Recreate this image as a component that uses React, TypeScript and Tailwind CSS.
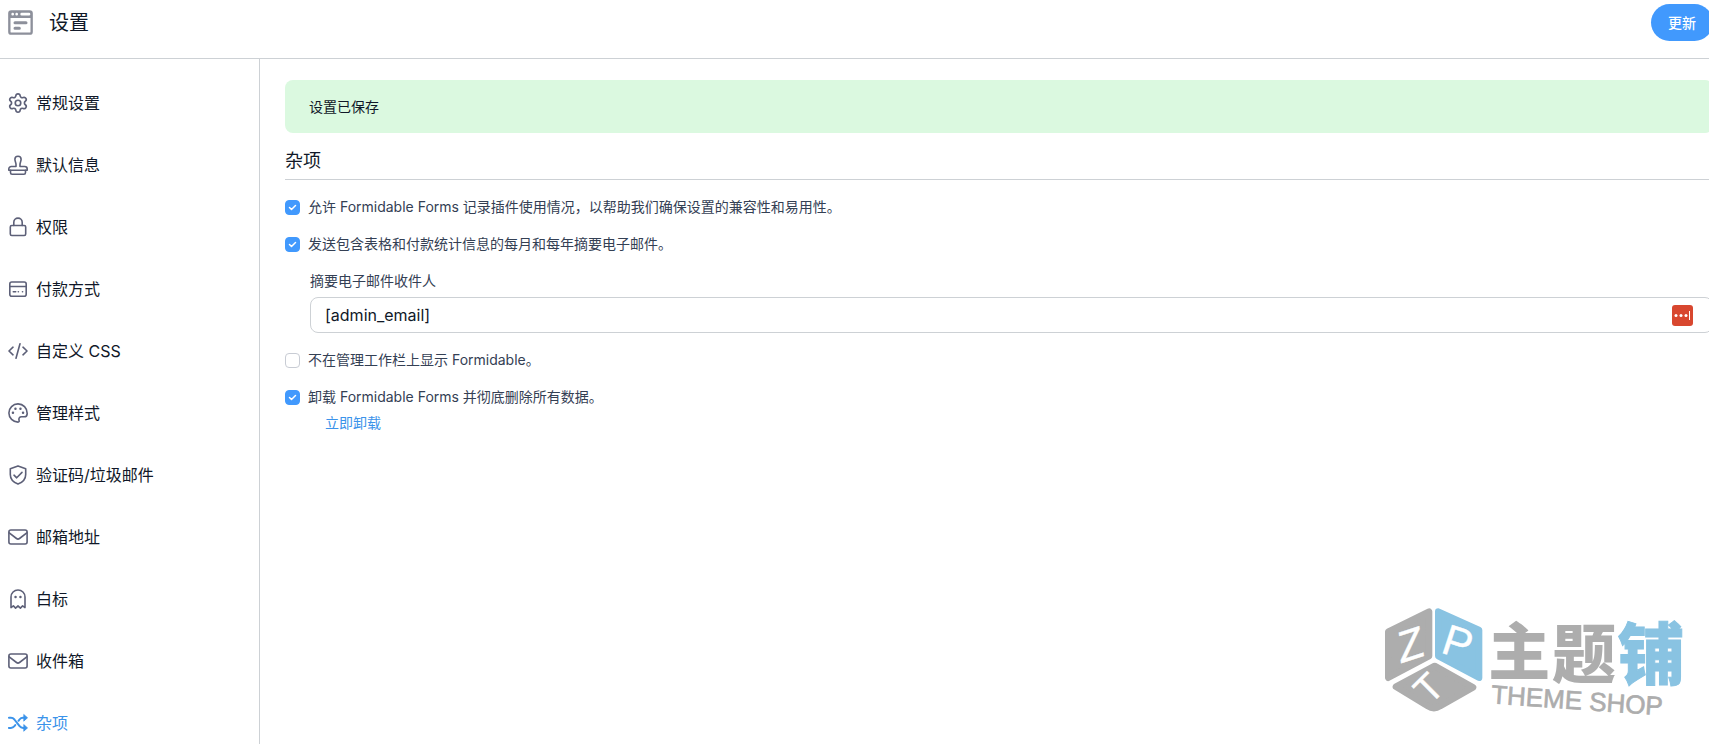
import React from "react";
import { Settings } from "lucide-react";

type IconName =
  | "gear"
  | "stamp"
  | "lock"
  | "card"
  | "code"
  | "palette"
  | "shield"
  | "mail"
  | "ghost"
  | "shuffle";

const iconShapes: Record<IconName, React.ReactNode> = {
  gear: <Settings x={-1} y={-1} width={22} height={22} strokeWidth={1.8} />,
  stamp: (
    <>
      <path d="M8 11.500V9.300C8 7.500 6.900 6.300 6.900 4.300a3.100 3.100 0 0 1 6.200 0c0 2-1.100 3.200-1.100 5v2.200h4.700A2.500 2.500 0 0 1 19.200 14v1.200H.8V14a2.500 2.500 0 0 1 2.500-2.500z" />
      <path d="M2.500 15.300v2.200c0 1 .6 1.700 1.600 1.700h11.800c1 0 1.600-.7 1.600-1.700v-2.200" />
    </>
  ),
  lock: (
    <>
      <rect x="2.300" y="8.500" width="15.400" height="10" rx="1.500" />
      <path d="M5.800 8.500V5.300a4.200 4.200 0 0 1 8.400 0v3.200" />
    </>
  ),
  card: (
    <>
      <rect x="1.800" y="3" width="16.400" height="14.200" rx="2" />
      <path d="M1.800 7.500h16.400M5.300 12.800h2.400M10.300 12.800h.1M14.500 12.800h.1" />
    </>
  ),
  code: <path d="M5 6.200 1 10l4 3.800M15 6.200l4 3.800-4 3.800M12 2.800 8 17.200" />,
  palette: (
    <>
      <path d="M10 .9a9.100 9.100 0 0 0 0 18.200c1 0 1.400-.7 1.100-1.600-.7-2.100.3-3.700 2.500-3.700h2.600c1.800 0 3-1.500 3-3.400C19.200 5.100 15.200.9 10 .9z" />
      <path d="M4.900 9.800h.1M7.400 5.800h.1M12.400 5.800h.1M15 9.800h.1" strokeWidth="2.400" />
    </>
  ),
  shield: (
    <>
      <path d="M10 .9 17.700 3.700v5.800c0 4.500-3.200 7.900-7.700 9.600-4.500-1.700-7.700-5.100-7.700-9.600V3.700z" />
      <path d="m6 10.200 2.700 2.600 5.300-5.400" />
    </>
  ),
  mail: (
    <>
      <rect x=".9" y="3" width="18.200" height="14" rx="2" />
      <path d="m1.200 5.800 7.300 5.700a2.500 2.500 0 0 0 3 0l7.300-5.700" />
    </>
  ),
  ghost: (
    <>
      <path d="M3 18.600V8a7 7 0 0 1 14 0v10.600l-2.400-1.700-2.200 2.200L10 16.900l-2.400 2.200-2.200-2.200z" />
      <path d="M7.500 8h.1M12.400 8h.1" strokeWidth="2.400" />
    </>
  ),
  shuffle: (
    <>
      <path d="M.9 4.800h2c1.500 0 2.600.6 3.500 1.700l5.200 6.700a4.500 4.500 0 0 0 3.500 1.700h1.500M.9 14.900h2c1.500 0 2.600-.6 3.500-1.700l.9-1.200M10.500 7.800l1-1.300a4.500 4.500 0 0 1 3.500-1.700h1.500" strokeWidth="2" />
      <path d="m16 1.700 3.500 3.100L16 7.900zM16 11.800l3.500 3.100L16 18z" fill="currentColor" strokeWidth=".8" />
    </>
  ),
};

const Icon = ({ name }: { name: IconName }) => (
  <svg
    className="w-5 h-5 shrink-0"
    viewBox="0 0 20 20"
    fill="none"
    stroke="currentColor"
    strokeWidth="1.600"
    strokeLinecap="round"
    strokeLinejoin="round"
    aria-hidden="true"
  >
    {iconShapes[name]}
  </svg>
);

const navItems: { label: string; icon: IconName; active?: boolean }[] = [
  { label: "常规设置", icon: "gear" },
  { label: "默认信息", icon: "stamp" },
  { label: "权限", icon: "lock" },
  { label: "付款方式", icon: "card" },
  { label: "自定义 CSS", icon: "code" },
  { label: "管理样式", icon: "palette" },
  { label: "验证码/垃圾邮件", icon: "shield" },
  { label: "邮箱地址", icon: "mail" },
  { label: "白标", icon: "ghost" },
  { label: "收件箱", icon: "mail" },
  { label: "杂项", icon: "shuffle", active: true },
];

interface CheckboxProps {
  id: string;
  label: string;
  defaultChecked?: boolean;
}

const Checkbox: React.FC<CheckboxProps> = ({ id, label, defaultChecked }) => (
  <div className="flex items-center gap-2 h-5">
    <span className="grid w-[15px] h-[15px] shrink-0">
      <input
        id={id}
        type="checkbox"
        defaultChecked={defaultChecked}
        className="peer col-start-1 row-start-1 w-[15px] h-[15px] appearance-none rounded border border-[#c8ccd4] bg-white checked:border-[#4199fd] checked:bg-[#4199fd]"
      />
      <svg
        className="pointer-events-none col-start-1 row-start-1 w-[15px] h-[15px] text-white opacity-0 peer-checked:opacity-100"
        viewBox="0 0 15 15"
        fill="none"
        stroke="currentColor"
        strokeWidth="1.500"
        strokeLinecap="round"
        strokeLinejoin="round"
      >
        <path d="m4.500 7.500 2 2 4-4" />
      </svg>
    </span>
    <label htmlFor={id} className="text-sm text-[#344054]">
      {label}
    </label>
  </div>
);

const FormLogo = () => (
  <svg className="w-[25px] h-[25px]" viewBox="0 0 75 75" aria-hidden="true">
    <rect x="4" y="4" width="67" height="67" rx="6" fill="none" stroke="#8d909b" strokeWidth="7" />
    <path d="M3 4h69v20H3z" fill="#8d909b" />
    <path d="M14 12.500h.1M26 12.500h.1M41 12.500h22" stroke="#fff" strokeWidth="8" strokeLinecap="round" />
    <path d="M21 38h33M21 55h13" stroke="#8d909b" strokeWidth="9" strokeLinecap="round" />
  </svg>
);

const Watermark = () => (
  <svg
    className="pointer-events-none absolute right-0 bottom-0 w-[329px] h-[154px]"
    viewBox="0 0 987 462"
    role="img"
    aria-label="主题铺 THEME SHOP"
  >
    {/* Cube */}
    <g strokeWidth="20" strokeLinejoin="round">
      <path d="M25 125 147 65V198L25 263z" fill="#adadad" stroke="#adadad" />
      <path d="M175 65 297 120V263L175 198z" fill="#89c3e2" stroke="#89c3e2" />
      <path d="M48 290 164 228 279 292 180 348Q162 360 143 348z" fill="#adadad" stroke="#adadad" />
    </g>
    <g
      fill="#fff"
      stroke="#fff"
      strokeWidth="1"
      textAnchor="middle"
      fontFamily="'Liberation Sans', sans-serif"
      fontSize="130"
    >
      <text transform="translate(104 207) rotate(-18)" fontStyle="italic">Z</text>
      <text transform="translate(220 200) rotate(18)">P</text>
      <text transform="translate(174 322) rotate(-45)" fontSize="116">T</text>
    </g>

    {/* Name */}
    <g
      fontFamily="'Noto Sans CJK SC', sans-serif"
      fontWeight="900"
      textAnchor="middle"
      fill="#adadad"
    >
      <text x="418" y="256" fontSize="186">主</text>
      <text x="612" y="262" fontSize="192">题</text>
      <text x="813" y="268" fontSize="200" fill="#89c3e2" stroke="#89c3e2" strokeWidth="3">铺</text>
    </g>
    <text
      transform="translate(332 340) rotate(4)"
      fontFamily="'Liberation Sans', sans-serif"
      fontSize="78"
      fill="#adadad"
      stroke="#adadad"
      strokeWidth="2"
    >
      THEME SHOP
    </text>
  </svg>
);

export default function App() {
  return (
    <div className="flex min-h-screen flex-col overflow-x-hidden bg-white font-['Inter','Noto_Sans_CJK_SC',sans-serif] text-[#101828]">
      {/* Header */}
      <header className="-mr-1 flex h-[59px] items-start justify-between border-b border-[#cdd1d5] pt-1 pl-2">
        <div className="flex items-center gap-4 h-[37px]">
          <FormLogo />
          <h1 className="text-xl">设置</h1>
        </div>
        <button
          type="button"
          className="h-[37px] rounded-full bg-[#4199fd] px-[17px] text-sm font-medium text-white"
        >
          更新
        </button>
      </header>

      <div className="relative flex flex-1">
        {/* Sidebar */}
        <nav className="w-[260px] shrink-0 border-r border-[#cdd1d5] pt-8 pl-2">
          <ul className="flex flex-col gap-[38px]">
            {navItems.map(({ label, icon, active }) => (
              <li key={label}>
                <a
                  href="#"
                  aria-current={active ? "page" : undefined}
                  className={`flex h-6 items-center gap-2 ${active ? "text-[#3b93ea]" : ""}`}
                >
                  <span className={active ? "" : "text-[#5d6078]"}>
                    <Icon name={icon} />
                  </span>
                  {label}
                </a>
              </li>
            ))}
          </ul>
        </nav>

        {/* Settings */}
        <main className="-mr-1 min-w-0 flex-1 pt-[21px] pl-[25px]">
          <div role="status" className="flex h-[53px] items-center rounded-lg bg-[#dbf9e0] px-6 text-sm">
            设置已保存
          </div>
          <h2 className="mt-3.5 border-b border-[#cdd1d5] pb-1 text-lg">杂项</h2>

          <form className="mt-[17px] flex flex-col gap-[17px]">
            <Checkbox
              id="tracking"
              label="允许 Formidable Forms 记录插件使用情况，以帮助我们确保设置的兼容性和易用性。"
              defaultChecked
            />
            <Checkbox
              id="summary"
              label="发送包含表格和付款统计信息的每月和每年摘要电子邮件。"
              defaultChecked
            />

            <div className="flex flex-col gap-1.5 pl-[25px]">
              <label htmlFor="recipients" className="text-sm text-[#344054]">
                摘要电子邮件收件人
              </label>
              <div className="flex h-9 items-center rounded-lg border border-[#cdd1d5] pr-[19px] pl-3.5">
                <input
                  id="recipients"
                  type="text"
                  defaultValue="[admin_email]"
                  className="min-w-0 flex-1 bg-transparent text-base outline-none"
                />
                <button type="button" aria-label="密码管理器" className="shrink-0">
                  <svg className="block w-[21px] h-[21px]" viewBox="0 0 21 21">
                    <rect width="21" height="21" rx="3" fill="#d8472f" />
                    <g fill="#fff">
                      <circle cx="4" cy="10.500" r="1.500" />
                      <circle cx="9" cy="10.500" r="1.500" />
                      <circle cx="14" cy="10.500" r="1.500" />
                      <rect x="17" y="6" width="1" height="9" />
                    </g>
                  </svg>
                </button>
              </div>
            </div>

            <Checkbox id="admin-bar" label="不在管理工作栏上显示 Formidable。" />
            <div className="flex flex-col gap-1.5">
              <Checkbox id="uninstall" label="卸载 Formidable Forms 并彻底删除所有数据。" defaultChecked />
              <a href="#" className="self-start pl-10 text-sm text-[#3b93ea]">
                立即卸载
              </a>
            </div>
          </form>
        </main>

        <Watermark />
      </div>
    </div>
  );
}
